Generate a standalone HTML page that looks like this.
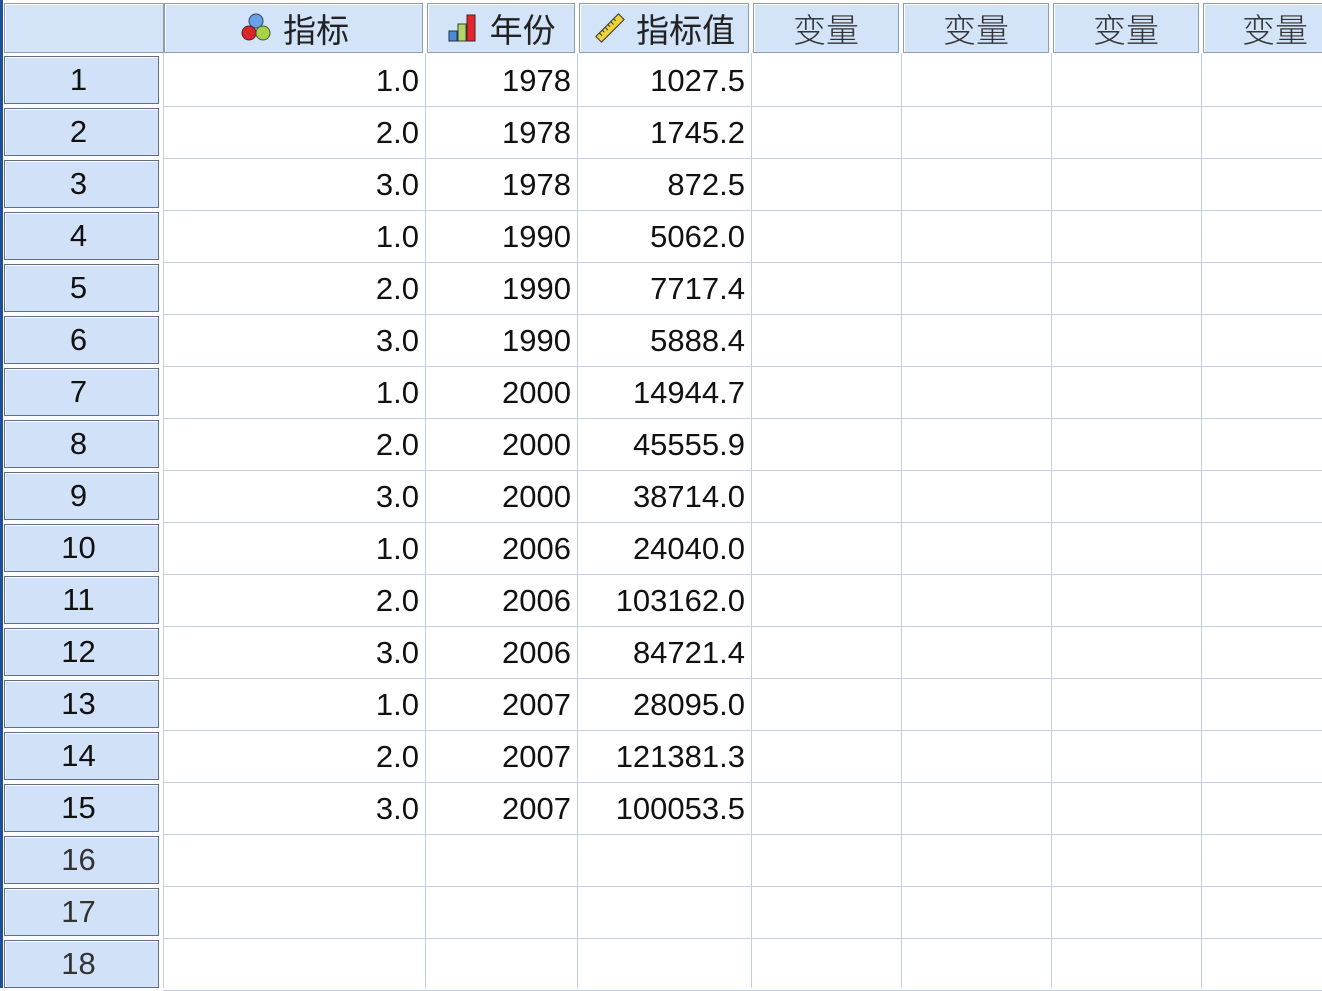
<!DOCTYPE html>
<html><head><meta charset="utf-8"><style>
body{margin:0;width:1322px;height:988px;background:#fff;overflow:hidden;position:relative;font-family:"Liberation Sans","Noto Sans CJK SC",sans-serif}
.a{position:absolute;box-sizing:border-box}
.hd{background:#d3e3f8;border:1px solid #8e9cb0;box-shadow:inset 1px 1px 0 #fff;top:3px;height:50px;font-size:33px;color:#222;display:flex;align-items:center;justify-content:center}
.v{color:#333;font-weight:300}
.rh{background:#d0e1f8;border:1px solid #5f6f88;box-shadow:inset 1px 1px 0 #fff;left:4px;width:155px;height:48px;font-size:31px;color:#111;display:flex;align-items:center;justify-content:center;padding-right:6px}
.vl{top:53px;height:935px;width:1px;background:#c3cfe0}
.hl{left:163px;right:0;height:1px;background:#c3cfe0}
.c{font-size:31px;color:#111;text-align:right;height:52px;line-height:52px}
</style></head><body>
<div class="a" style="left:0;top:0;width:3px;height:988px;background:#1f4f95"></div>
<div class="a hd" style="left:4px;width:160px;top:3px"></div>
<div class="a hd" style="left:164px;width:259px"><svg width="36" height="36" viewBox="0 0 36 36"><circle cx="18" cy="11" r="7" fill="#6aa0e8" stroke="#345" stroke-width="1"/><circle cx="11" cy="23" r="7" fill="#d8262c" stroke="#522" stroke-width="1"/><circle cx="25" cy="23" r="7" fill="#a6d24a" stroke="#453" stroke-width="1"/></svg>&nbsp;指标</div>
<div class="a hd" style="left:427px;width:148px"><svg width="34" height="30" viewBox="0 0 34 30"><rect x="3" y="18" width="8" height="10" fill="#4a8ad8" stroke="#234"/><rect x="12" y="11" width="8" height="17" fill="#b5d46a" stroke="#342"/><rect x="21" y="2" width="8" height="26" fill="#e2262c" stroke="#422"/></svg>&nbsp;年份</div>
<div class="a hd" style="left:579px;width:170px"><svg width="34" height="30" viewBox="0 0 34 30"><g transform="rotate(-45 17 15)"><rect x="1" y="11" width="32" height="8" fill="#f0d23a" stroke="#333"/><path d="M6 11v4M10 11v3M14 11v4M18 11v3M22 11v4M26 11v3" stroke="#333"/></g></svg>&nbsp;指标值</div>
<div class="a hd v" style="left:753px;width:146px">变量</div>
<div class="a hd v" style="left:903px;width:146px">变量</div>
<div class="a hd v" style="left:1053px;width:146px">变量</div>
<div class="a hd v" style="left:1203px;width:130px;justify-content:flex-start;padding-left:38px">变量</div>
<div class="a vl" style="left:163px"></div>
<div class="a vl" style="left:425px"></div>
<div class="a vl" style="left:577px"></div>
<div class="a vl" style="left:751px"></div>
<div class="a vl" style="left:901px"></div>
<div class="a vl" style="left:1051px"></div>
<div class="a vl" style="left:1201px"></div>
<div id="g"></div>
<script>
var d=[["1.0",1978,"1027.5"],["2.0",1978,"1745.2"],["3.0",1978,"872.5"],["1.0",1990,"5062.0"],["2.0",1990,"7717.4"],["3.0",1990,"5888.4"],["1.0",2000,"14944.7"],["2.0",2000,"45555.9"],["3.0",2000,"38714.0"],["1.0",2006,"24040.0"],["2.0",2006,"103162.0"],["3.0",2006,"84721.4"],["1.0",2007,"28095.0"],["2.0",2007,"121381.3"],["3.0",2007,"100053.5"]];
var h="";
for(var i=0;i<18;i++){var t=55+52*i;
h+='<div class="a rh" style="top:'+(t+1)+'px;'+(i>=15?'color:#333':'')+'">'+(i+1)+'</div>';
h+='<div class="a hl" style="top:'+(t+51)+'px"></div>';
if(i<15){h+='<div class="a c" style="left:163px;width:256px;top:'+t+'px">'+d[i][0]+'</div>';
h+='<div class="a c" style="left:425px;width:146px;top:'+t+'px">'+d[i][1]+'</div>';
h+='<div class="a c" style="left:577px;width:168px;top:'+t+'px">'+d[i][2]+'</div>';}}
document.getElementById("g").innerHTML=h;
</script>
</body></html>
